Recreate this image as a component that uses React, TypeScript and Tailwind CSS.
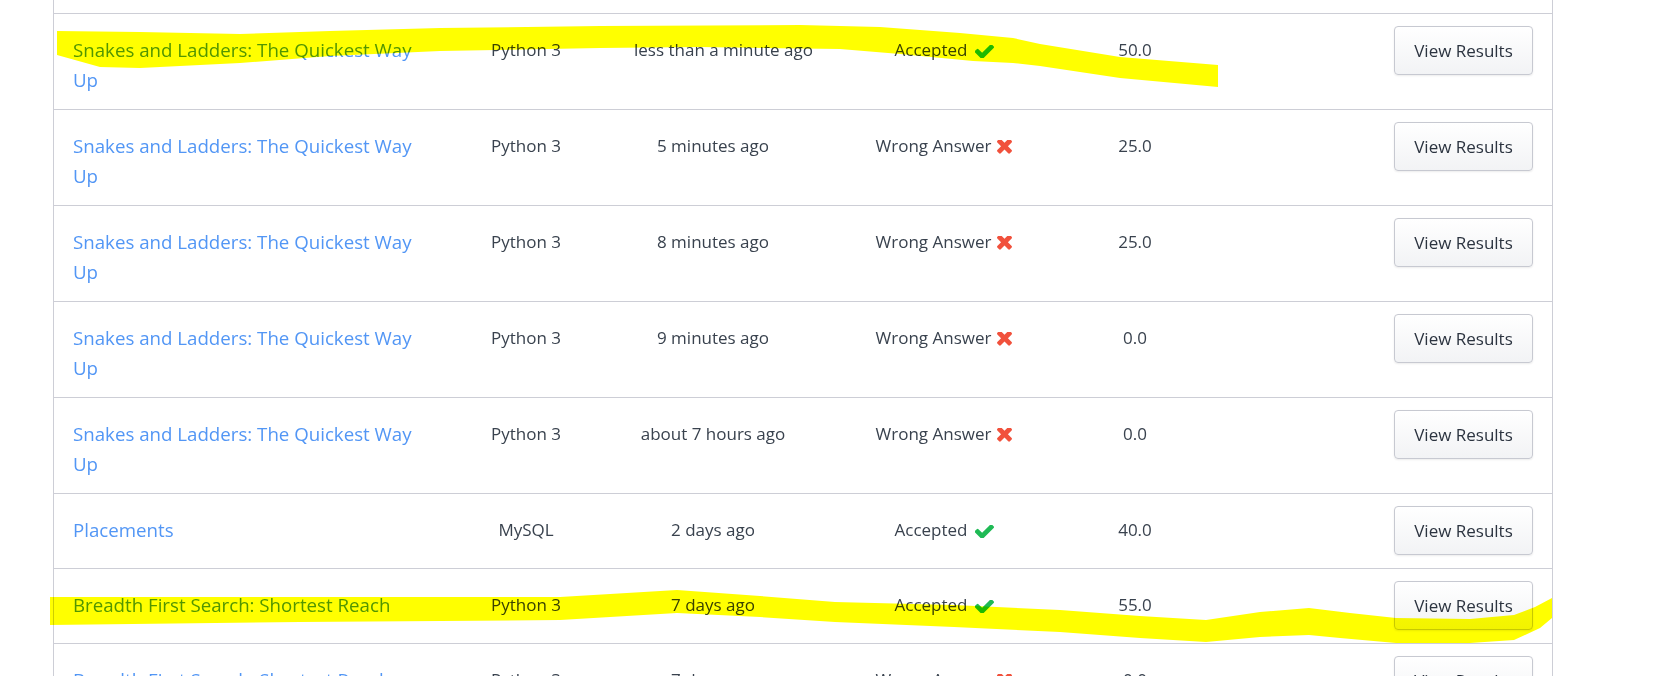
import React from "react";

type Row = {
  name: string;
  lang: string;
  time: string;
  ok: boolean;
  score: string;
};

const rows: Row[] = [
  { name: "Snakes and Ladders: The Quickest Way Up", lang: "Python 3", time: "less than a minute ago", ok: true, score: "50.0" },
  { name: "Snakes and Ladders: The Quickest Way Up", lang: "Python 3", time: "5 minutes ago", ok: false, score: "25.0" },
  { name: "Snakes and Ladders: The Quickest Way Up", lang: "Python 3", time: "8 minutes ago", ok: false, score: "25.0" },
  { name: "Snakes and Ladders: The Quickest Way Up", lang: "Python 3", time: "9 minutes ago", ok: false, score: "0.0" },
  { name: "Snakes and Ladders: The Quickest Way Up", lang: "Python 3", time: "about 7 hours ago", ok: false, score: "0.0" },
  { name: "Placements", lang: "MySQL", time: "2 days ago", ok: true, score: "40.0" },
  { name: "Breadth First Search: Shortest Reach", lang: "Python 3", time: "7 days ago", ok: true, score: "55.0" },
  { name: "Breadth First Search: Shortest Reach", lang: "Python 3", time: "7 days ago", ok: false, score: "0.0" },
];

function CheckIcon() {
  return (
    <svg viewBox="143 402 1528 1020" className="ml-[7px] mt-[10px] h-[13px] w-[19px] shrink-0" aria-hidden>
      <path
        fill="#1fba55"
        d="M1671 566q0 40-28 68l-724 724-136 136q-28 28-68 28t-68-28l-136-136-362-362q-28-28-28-68t28-68l136-136q28-28 68-28t68 28l294 295 656-657q28-28 68-28t68 28l136 136q28 28 28 68z"
      />
    </svg>
  );
}

function TimesIcon() {
  return (
    <svg viewBox="110 470 1188 1188" className="ml-[6px] mt-[9px] h-[15px] w-[15px] shrink-0" aria-hidden>
      <path
        fill="#f1513c"
        d="M1298 1322q0 40-28 68l-136 136q-28 28-68 28t-68-28l-294-294-294 294q-28 28-68 28t-68-28l-136-136q-28-28-28-68t28-68l294-294-294-294q-28-28-28-68t28-68l136-136q28-28 68-28t68 28l294 294 294-294q28-28 68-28t68 28l136 136q28 28 28 68t-28 68l-294 294 294 294q28 28 28 68z"
      />
    </svg>
  );
}

function SubmissionRow({ row }: { row: Row }) {
  return (
    <div className="grid grid-cols-[376px_192px_182px_280px_102px_1fr] border-t border-[#cdced6] text-[17px] leading-[30px] text-[#39424e]">
      <div className="pl-[19px] pr-[16px] pt-[21px] pb-[14px] text-[18.7px] leading-[30px]">
        <a className="cursor-pointer text-[#5296f5]">{row.name}</a>
      </div>
      <div className="pt-[21px] text-center">{row.lang}</div>
      <div className="px-[12px] pt-[21px] text-center whitespace-nowrap">{row.time}</div>
      <div className="flex justify-center pt-[21px]">
        <span>{row.ok ? "Accepted" : "Wrong Answer"}</span>
        {row.ok ? <CheckIcon /> : <TimesIcon />}
      </div>
      <div className="pt-[21px] text-center">{row.score}</div>
      <div className="flex justify-end pr-[19px] pt-[12px] pb-[13px]">
        <button className="h-[49px] w-[139px] rounded-[4px] border border-[#c7c9d1] bg-gradient-to-b from-white to-[#f2f3f5] text-[17px] text-[#2c3440] shadow-[0_1px_2px_rgba(0,0,0,0.08)]">
          View Results
        </button>
      </div>
    </div>
  );
}

export default function App() {
  return (
    <div className="relative h-[676px] w-[1660px] overflow-hidden bg-white font-['Open_Sans',sans-serif]">
      <div className="ml-[53px] w-[1500px] border-x border-[#cdced6]">
        <div className="h-[13px]" />
        {rows.map((r, i) => (
          <SubmissionRow key={i} row={r} />
        ))}
      </div>
      <svg
        className="pointer-events-none absolute left-0 top-0 mix-blend-multiply"
        width="1660"
        height="676"
        viewBox="0 0 1660 676"
        aria-hidden
      >
        <polygon
          fill="#ffff00"
          points="57,31 140,32 240,34 330,31 440,28 600,26 800,25 880,27 960,33 1013,38 1040,44 1120,57 1218,65 1218,87 1120,78 1040,66 1013,63 973,61 900,54 840,49 700,47 600,48 440,51 330,56 240,63 140,68 100,67 57,55"
        />
        <polygon
          fill="#ffff00"
          points="50,597 300,597 560,597 677,590 760,596 835,602 954,605 1060,610 1140,616 1206,620 1260,612 1309,608 1350,613 1396,618 1470,619 1514,615 1535,607 1552,598 1552,618 1540,628 1514,640 1470,643 1396,643 1340,638 1309,635 1260,637 1206,642 1140,638 1060,632 954,627 835,622 760,617 677,613 560,620 300,622 50,625"
        />
      </svg>
    </div>
  );
}
